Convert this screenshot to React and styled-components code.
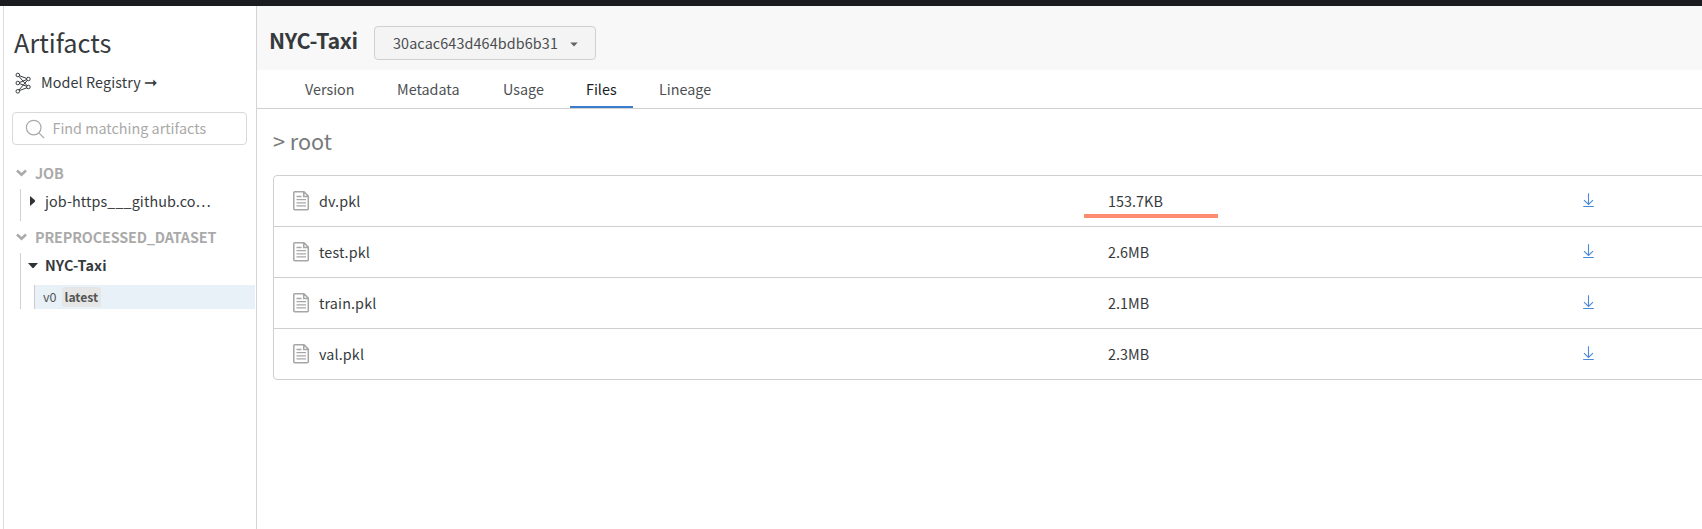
import React from "react";
import styled, { createGlobalStyle } from "styled-components";

const GlobalStyle = createGlobalStyle`
  * { box-sizing: border-box; }
  body {
    margin: 0;
    overflow: hidden;
    background: #fff;
    color: #363a3d;
    font-family: "Noto Sans CJK SC", "Noto Sans", sans-serif;
    font-size: 14.35px;
    line-height: 20px;
    white-space: nowrap;
  }
`;

const Page = styled.div`
  height: 529px;
  width: 100%;
  display: flex;
  flex-direction: column;
  overflow: hidden;
`;
const TopBar = styled.div`
  height: 6px;
  flex: none;
  background: #1a1c1f;
`;
const Body = styled.div`
  flex: 1;
  display: flex;
  min-height: 0;
`;
const Sidebar = styled.aside`
  width: 254px;
  margin-left: 3px;
  flex: none;
  border-left: 1px solid #dcdcdc;
  border-right: 1px solid #d4d4d4;
`;
const SidebarTitle = styled.h1`
  margin: 17px 0 0 10px;
  font-size: 25.3px;
  line-height: 38px;
  font-weight: 400;
`;
const RegistryLink = styled.a`
  display: flex;
  align-items: center;
  height: 26px;
  margin: 8px 0 0 11px;
  color: #363a3d;
`;
const RegistryLabel = styled.span`
  height: 20px;
  margin-left: 9px;
  letter-spacing: 0.1px;
`;
const SearchBox = styled.div`
  width: 235px;
  height: 33px;
  margin: 17px 0 0 8px;
  border: 1px solid #d9d9d9;
  border-radius: 4px;
  display: flex;
  align-items: center;
  padding-left: 12px;
  color: #a9a9a9;
`;
const SearchLabel = styled.span`
  margin: 0 0 2px 7.5px;
`;
const Tree = styled.nav`
  margin-top: 14px;
`;
const GroupHeading = styled.div`
  height: 28px;
  display: flex;
  align-items: center;
  padding-left: 12px;
  gap: 8px;
  color: #aaa;
  font-weight: 700;
  letter-spacing: -0.14px;
`;
const GroupItems = styled.div`
  margin: 2px 0 2px 16px;
  border-left: 1px solid #d0d0d0;
  height: ${(p) => p.$height}px;
`;
const ArtifactItem = styled.div`
  display: flex;
  align-items: center;
  height: 24px;
  padding-left: 7px;
  gap: 7px;
  font-weight: ${(p) => (p.$open ? 700 : 400)};
  letter-spacing: 0.1px;
`;
const VersionItem = styled.div`
  margin: 8px 1px 0 13px;
  height: 24px;
  display: flex;
  align-items: center;
  border-left: 1px solid #ccc;
  background: #e8f1f7;
  padding-left: 8px;
  gap: 5px;
  font-size: 12.6px;
  color: #555;
`;
const Alias = styled.span`
  height: 20px;
  padding: 0 3px;
  border-radius: 3px;
  background: #e6e6e6;
  font-weight: 700;
  font-size: 12.2px;
`;
const Main = styled.main`
  flex: 1;
  min-width: 0;
`;
const Header = styled.header`
  height: 64px;
  background: #f8f8f8;
  display: flex;
  padding-left: 12px;
`;
const ArtifactName = styled.h2`
  margin: 16px 0 0;
  width: 105px;
  font-size: 21.5px;
  line-height: 36px;
  font-weight: 700;
  letter-spacing: -0.3px;
`;
const VersionSelect = styled.button`
  width: 222px;
  height: 34px;
  margin: 20px 0 0;
  padding: 0 17px 0 18px;
  display: flex;
  align-items: center;
  justify-content: space-between;
  border: 1px solid #d0d0d0;
  border-radius: 4px;
  background: #f4f4f4;
  font: inherit;
  letter-spacing: 0.12px;
  color: #4a4d50;
`;
const Tabs = styled.div`
  height: 39px;
  border-bottom: 1px solid #d0d0d0;
  display: flex;
  padding-left: 32px;
`;
const Tab = styled.div`
  width: ${(p) => p.$width}px;
  margin-right: ${(p) => p.$gap ?? 12}px;
  padding: 9px 0 0 16px;
  border-bottom: 2px solid ${(p) => (p.$active ? "#3b7dcc" : "transparent")};
  color: ${(p) => (p.$active ? "#1a1c1f" : "#4c5053")};
`;
const Breadcrumb = styled.div`
  margin: 15px 0 0 16px;
  font-size: 21.6px;
  line-height: 34px;
  color: #77797b;
`;
const FileTable = styled.div`
  margin: 17px -10px 0 16px;
  border: 1px solid #cfcfcf;
  border-radius: 4px;
`;
const FileRow = styled.div`
  height: 51px;
  display: grid;
  grid-template-columns: 26px 789px 475px 1fr;
  align-items: center;
  padding-left: 19px;
  border-bottom: 1px solid #cfcfcf;
  &:last-child {
    height: 50px;
    border-bottom: 0;
  }
`;
const FileName = styled.span`
  letter-spacing: 0.13px;
`;
const FileSize = styled.div`
  position: relative;
  letter-spacing: 0.05px;
`;
const Highlight = styled.span`
  position: absolute;
  left: -24px;
  top: 23px;
  width: 134px;
  height: 4px;
  background: #ff8b70;
`;
const Icon = styled.svg`
  display: block;
  flex: none;
  margin-bottom: ${(p) => p.$lift ?? 0}px;
`;
const ArrowGlyph = styled.span`
  font-size: 16px;
  line-height: 0;
`;

const RegistryIcon = () => (
  <Icon $lift={-2} width="17" height="22" viewBox="0 0 17 22" fill="none" stroke="#363a3d" strokeWidth="1">
    <circle cx="2.8" cy="3" r="1.8" />
    <circle cx="2.8" cy="11" r="1.8" />
    <circle cx="2.8" cy="19.3" r="1.8" />
    <circle cx="13.4" cy="7" r="1.8" />
    <circle cx="13.4" cy="15" r="1.8" />
    <path d="M4.4 3.7L11.8 6.5M4 4.5L12.2 13.8M4.5 10.5L11.8 7.5M4.5 11.6L11.8 14.4M4 18L12.3 8.4M4.4 18.5L11.9 15.8" />
  </Icon>
);
const SearchIcon = () => (
  <Icon width="20" height="20" viewBox="0 0 20 20" fill="none" stroke="#aaa" strokeWidth="1.2">
    <circle cx="8.7" cy="8.6" r="7.3" />
    <path d="M13.9 13.8L19 19" />
  </Icon>
);
const ChevronIcon = () => (
  <Icon width="11" height="8" viewBox="0 0 11 8" fill="none" stroke="#aaa" strokeWidth="2.6">
    <path d="M1 1.5L5.5 5.7L10 1.5" />
  </Icon>
);
const TriangleIcon = ({ open }) => (
  <Icon width="10" height="10" viewBox="0 0 10 10" fill="#303336">
    <path d={open ? "M0 3H10L6 7.5Q5 8.5 4 7.5Z" : "M2 0V10L6.7 6Q7.7 5 6.7 4Z"} />
  </Icon>
);
const CaretIcon = () => (
  <Icon $lift={-2} width="8" height="5" viewBox="0 0 8 5" fill="#606366">
    <path d="M0.3 0.5H7.7L4 4.5Z" />
  </Icon>
);
const FileIcon = () => (
  <Icon width="17" height="20" viewBox="0 0 17 20" fill="none" stroke="#a6a6a6" strokeWidth="1.5">
    <path d="M1.8 0.8H11L15.3 5.1V17.8Q15.3 18.8 14.3 18.8H1.8Q0.8 18.8 0.8 17.8V1.8Q0.8 0.8 1.8 0.8ZM10.7 1V5.5H15.3" />
    <path d="M3.5 5.5H8.5M3.5 8.7H13M3.5 11.8H13M3.5 14.9H13" strokeWidth="1.3" />
  </Icon>
);
const DownloadIcon = () => (
  <Icon $lift={1} width="12" height="15" viewBox="0 0 12 15" fill="none" stroke="#4a8ad4" strokeWidth="1.1">
    <path d="M5.5 0.3V11.3M1 7.2L5.5 11.5L10 7.2M0.2 13.5H10.8" />
  </Icon>
);

const tabs = [
  { label: "Version", width: 80 },
  { label: "Metadata", width: 94 },
  { label: "Usage", width: 71 },
  { label: "Files", width: 63, gap: 10, active: true },
  { label: "Lineage", width: 84 },
];
const files = [
  { name: "dv.pkl", size: "153.7KB", marked: true },
  { name: "test.pkl", size: "2.6MB" },
  { name: "train.pkl", size: "2.1MB" },
  { name: "val.pkl", size: "2.3MB" },
];

export default function App() {
  return (
    <Page>
      <GlobalStyle />
      <TopBar />
      <Body>
        <Sidebar>
          <SidebarTitle>Artifacts</SidebarTitle>
          <RegistryLink>
            <RegistryIcon />
            <RegistryLabel>Model Registry <ArrowGlyph>➞</ArrowGlyph></RegistryLabel>
          </RegistryLink>
          <SearchBox>
            <SearchIcon />
            <SearchLabel>Find matching artifacts</SearchLabel>
          </SearchBox>
          <Tree>
            <GroupHeading><ChevronIcon />JOB</GroupHeading>
            <GroupItems $height={32}>
              <ArtifactItem><TriangleIcon />job-https___github.co…</ArtifactItem>
            </GroupItems>
            <GroupHeading><ChevronIcon />PREPROCESSED_DATASET</GroupHeading>
            <GroupItems $height={56}>
              <ArtifactItem $open><TriangleIcon open />NYC-Taxi</ArtifactItem>
              <VersionItem>v0 <Alias>latest</Alias></VersionItem>
            </GroupItems>
          </Tree>
        </Sidebar>
        <Main>
          <Header>
            <ArtifactName>NYC-Taxi</ArtifactName>
            <VersionSelect>30acac643d464bdb6b31<CaretIcon /></VersionSelect>
          </Header>
          <Tabs>
            {tabs.map((t) => (
              <Tab key={t.label} $width={t.width} $gap={t.gap} $active={t.active}>{t.label}</Tab>
            ))}
          </Tabs>
          <Breadcrumb>&gt; root</Breadcrumb>
          <FileTable>
            {files.map((f) => (
              <FileRow key={f.name}>
                <FileIcon />
                <FileName>{f.name}</FileName>
                <FileSize>{f.size}{f.marked && <Highlight />}</FileSize>
                <DownloadIcon />
              </FileRow>
            ))}
          </FileTable>
        </Main>
      </Body>
    </Page>
  );
}
